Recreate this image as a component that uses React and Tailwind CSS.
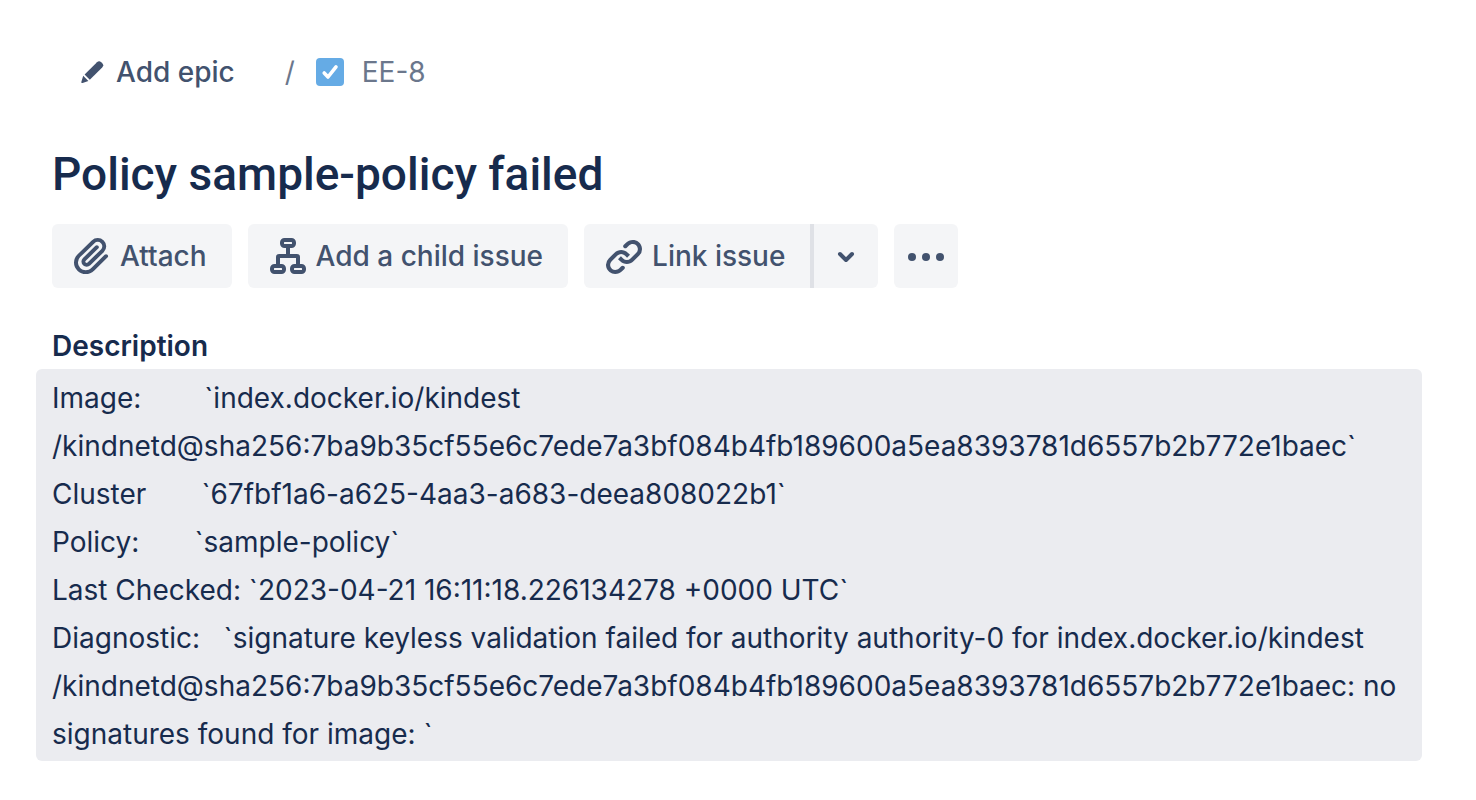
import React from "react";

const DIGEST = "sha256:7ba9b35cf55e6c7ede7a3bf084b4fb189600a5ea8393781d6557b2b772e1baec";

function PencilIcon() {
  return (
    <svg viewBox="0 0 24 24" className="w-6 h-6" fill="currentColor" aria-hidden="true">
      <path d="M4.6 14.6 17 2.2a3 3 0 0 1 4.2 0l1 1a3 3 0 0 1 0 4.2L9.8 19.8z" />
      <path d="M3.2 15.8 8.4 21l-5.8 1.9c-.9.3-1.5-.3-1.2-1.2z" />
    </svg>
  );
}

function TaskIcon() {
  return (
    <svg viewBox="0 0 28 28" className="w-7 h-7" aria-hidden="true">
      <rect width="28" height="28" rx="4" fill="#65abe5" />
      <path
        d="m8.2 15 3.8 4 8-10.2"
        fill="none"
        stroke="#fff"
        strokeWidth="3.6"
        strokeLinecap="round"
        strokeLinejoin="round"
      />
    </svg>
  );
}

function AttachIcon() {
  return (
    <svg viewBox="0 0 24 24" className="w-12 h-12" fill="currentColor" aria-hidden="true">
      <path d="M11.643 17.965c-1.53 1.495-4.016 1.496-5.542.004a3.773 3.773 0 01.002-5.412l7.147-6.985a2.316 2.316 0 013.233-.003c.893.873.895 2.282.004 3.153l-6.703 6.55a.653.653 0 01-.914-.008.62.62 0 010-.902l6.229-6.087a.941.941 0 000-1.353.995.995 0 00-1.384 0l-6.23 6.087a2.502 2.502 0 000 3.607 2.643 2.643 0 003.683.009l6.703-6.55a4.074 4.074 0 00-.003-5.859 4.306 4.306 0 00-6.002.003l-7.148 6.985a5.655 5.655 0 00-.001 8.118c2.29 2.239 6.015 2.238 8.31-.005l6.686-6.533a.941.941 0 000-1.353.995.995 0 00-1.384 0l-6.686 6.534z" />
    </svg>
  );
}

function ChildIssuesIcon() {
  return (
    <svg
      viewBox="0 0 48 48"
      className="w-12 h-12"
      fill="none"
      stroke="currentColor"
      strokeWidth="4"
      aria-hidden="true"
    >
      <rect x="18" y="8" width="12" height="6" rx="2.5" />
      <rect x="8" y="34" width="12" height="6" rx="2.5" />
      <rect x="28" y="34" width="12" height="6" rx="2.5" />
      <path d="M24 14v10M14 34v-9a1 1 0 0 1 1-1h18a1 1 0 0 1 1 1v9" />
    </svg>
  );
}

function LinkIcon() {
  return (
    <svg viewBox="0 0 24 24" className="w-12 h-12" fill="currentColor" aria-hidden="true">
      <path d="M12.856 5.457l-.937.92a1.002 1.002 0 000 1.437 1.047 1.047 0 001.463 0l.984-.966c.967-.95 2.542-1.135 3.602-.288a2.54 2.54 0 01.203 3.81l-2.903 2.852a2.646 2.646 0 01-3.696 0l-1.11-1.09L9 13.57l1.108 1.089c1.822 1.788 4.802 1.788 6.622 0l2.905-2.852a4.558 4.558 0 00-.357-6.82c-1.893-1.517-4.695-1.226-6.422.47" />
      <path d="M11.144 19.543l.937-.92a1.002 1.002 0 000-1.437 1.047 1.047 0 00-1.462 0l-.985.966c-.967.95-2.542 1.135-3.602.288a2.54 2.54 0 01-.203-3.81l2.903-2.852a2.646 2.646 0 013.696 0l1.11 1.09L15 11.43l-1.108-1.089c-1.822-1.788-4.802-1.788-6.622 0l-2.905 2.852a4.558 4.558 0 00.357 6.82c1.893 1.517 4.695 1.226 6.422-.47" />
    </svg>
  );
}

function ChevronIcon() {
  return (
    <svg
      viewBox="0 0 24 24"
      className="w-6 h-6"
      fill="none"
      stroke="currentColor"
      strokeWidth="4"
      strokeLinecap="round"
      strokeLinejoin="round"
      aria-hidden="true"
    >
      <path d="m6 10 6 6 6-6" />
    </svg>
  );
}

function MoreIcon() {
  return (
    <svg viewBox="0 0 48 48" className="w-12 h-12" fill="currentColor" aria-hidden="true">
      <circle cx="10" cy="25" r="4" />
      <circle cx="24" cy="25" r="4" />
      <circle cx="38" cy="25" r="4" />
    </svg>
  );
}

function ActionButton({ icon, children, className = "rounded-md" }) {
  return (
    <button
      type="button"
      className={`flex h-16 items-center gap-1 bg-[#f4f5f7] pl-4 pr-[25px] hover:bg-[#ebecf0] ${className}`}
    >
      {icon}
      <span>{children}</span>
    </button>
  );
}

export default function App() {
  return (
    <main className="min-h-screen bg-white px-9 pt-12 pb-9 font-['Inter','Liberation_Sans',sans-serif] text-[28px] text-[#172b4d]">
      <nav aria-label="Breadcrumb" className="flex h-12 items-center pl-11">
        <button type="button" className="flex items-center gap-3 font-medium text-[#42526e]">
          <PencilIcon />
          Add epic
        </button>
        <span className="ml-[50px] mr-[21px] text-[#6b778c]">/</span>
        <a href="#EE-8" className="flex items-center gap-[18px] text-[#6b778c]">
          <TaskIcon />
          EE-8
        </a>
      </nav>

      <h1 className="mt-12 px-4 font-['Roboto','Liberation_Sans',sans-serif] text-[46px] leading-[60px] font-medium">
        Policy sample-policy failed
      </h1>

      <div className="mt-5 flex flex-wrap gap-4 px-4 font-medium text-[#42526e]">
        <ActionButton icon={<AttachIcon />}>Attach</ActionButton>
        <ActionButton icon={<ChildIssuesIcon />}>Add a child issue</ActionButton>
        <div className="flex">
          <ActionButton icon={<LinkIcon />} className="rounded-l-md">
            Link issue
          </ActionButton>
          <button
            type="button"
            aria-label="Link issue options"
            className="flex h-16 w-17 items-center justify-center rounded-r-md border-l-4 border-[#dfe1e6] bg-[#f4f5f7] hover:bg-[#ebecf0]"
          >
            <ChevronIcon />
          </button>
        </div>
        <button
          type="button"
          aria-label="More actions"
          className="flex size-16 items-center justify-center rounded-md bg-[#f4f5f7] hover:bg-[#ebecf0]"
        >
          <MoreIcon />
        </button>
      </div>

      <h2 className="mt-10 px-4 leading-9 font-semibold">Description</h2>
      <div className="mt-[5px] mr-[18px] rounded-md bg-[#ebecf0] px-4 pt-[5px] pb-[3px] leading-12 whitespace-pre">
        <p>
          {"Image:        `index.docker.io/kindest"}
          <br />
          {`/kindnetd@${DIGEST}\``}
        </p>
        <p>{"Cluster       `67fbf1a6-a625-4aa3-a683-deea808022b1`"}</p>
        <p>{"Policy:       `sample-policy`"}</p>
        <p>{"Last Checked: `2023-04-21 16:11:18.226134278 +0000 UTC`"}</p>
        <p>
          {"Diagnostic:   `signature keyless validation failed for authority authority-0 for index.docker.io/kindest"}
          <br />
          {`/kindnetd@${DIGEST}: no`}
          <br />
          {"signatures found for image: `"}
        </p>
      </div>
    </main>
  );
}
